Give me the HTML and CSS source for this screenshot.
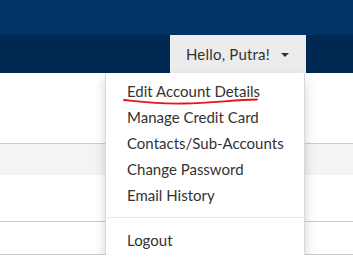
FILE: index.html
```html
<!DOCTYPE html>
<html lang="en">
<head>
    <meta charset="UTF-8">
    <title>Account</title>
    <link rel="stylesheet" href="styles.css">
</head>
<body>
    <div class="topbar"></div>
    <div class="navbar">
        <div class="user-menu">
            <div class="user-toggle">Hello, Putra! <span class="caret"></span></div>
            <div class="dropdown">
                <a href="#">Edit Account Details</a>
                <a href="#">Manage Credit Card</a>
                <a href="#">Contacts/Sub-Accounts</a>
                <a href="#">Change Password</a>
                <a href="#">Email History</a>
                <div class="divider"></div>
                <a href="#">Logout</a>
                <svg class="mark" width="140" height="10" viewBox="0 0 140 10">
                    <path d="M1 3 C 20 5, 35 7, 60 6.5 C 90 6, 110 3, 134 2.5" fill="none" stroke="#e8141c" stroke-width="1.8" stroke-linecap="round"/>
                </svg>
            </div>
        </div>
    </div>
    <div class="content">
        <div class="row row-top"></div>
        <div class="row row-grey"></div>
        <div class="row row-mid"></div>
        <div class="row row-low"></div>
    </div>
</body>
</html>
```

FILE: styles.css
```css
body {
    margin: 0;
    font-family: 'Lato', sans-serif;
    font-size: 15px;
    color: #333;
    background: white;
}
.topbar {
    height: 35px;
    background: #003366;
}
.navbar {
    height: 38px;
    background: #002952;
    display: flex;
    justify-content: flex-end;
    padding-right: 47px;
}
.user-menu {
    position: relative;
}
.user-toggle {
    height: 38px;
    box-sizing: border-box;
    padding: 0 17px 0 16px;
    background: #ececec;
    display: flex;
    align-items: center;
    gap: 11px;
    color: #333;
    letter-spacing: 0.2px;
}
.caret {
    width: 0;
    height: 0;
    border-top: 4px solid #333;
    border-left: 4px solid transparent;
    border-right: 4px solid transparent;
    margin-top: 1px;
}
.dropdown {
    position: absolute;
    top: 100%;
    right: 1px;
    width: 198px;
    padding: 5px 0;
    background: white;
    border: 1px solid rgba(0,0,0,0.15);
    border-top: none;
    border-radius: 0 0 4px 4px;
    box-shadow: 0 6px 12px rgba(0,0,0,0.175);
    z-index: 10;
}
.dropdown a {
    display: block;
    padding: 3px 21px;
    line-height: 20px;
    color: #333;
    text-decoration: none;
    white-space: nowrap;
}
.divider {
    height: 1px;
    margin: 9px 0;
    background: #e5e5e5;
}
.mark {
    position: absolute;
    left: 17px;
    top: 24px;
}
.row {
    border-bottom: 1px solid #cccccc;
}
.row-top {
    height: 70px;
}
.row-grey {
    height: 31px;
    background: #f4f4f4;
    border-bottom: none;
}
.row-mid {
    height: 46px;
}
.row-low {
    height: 32px;
}
```
